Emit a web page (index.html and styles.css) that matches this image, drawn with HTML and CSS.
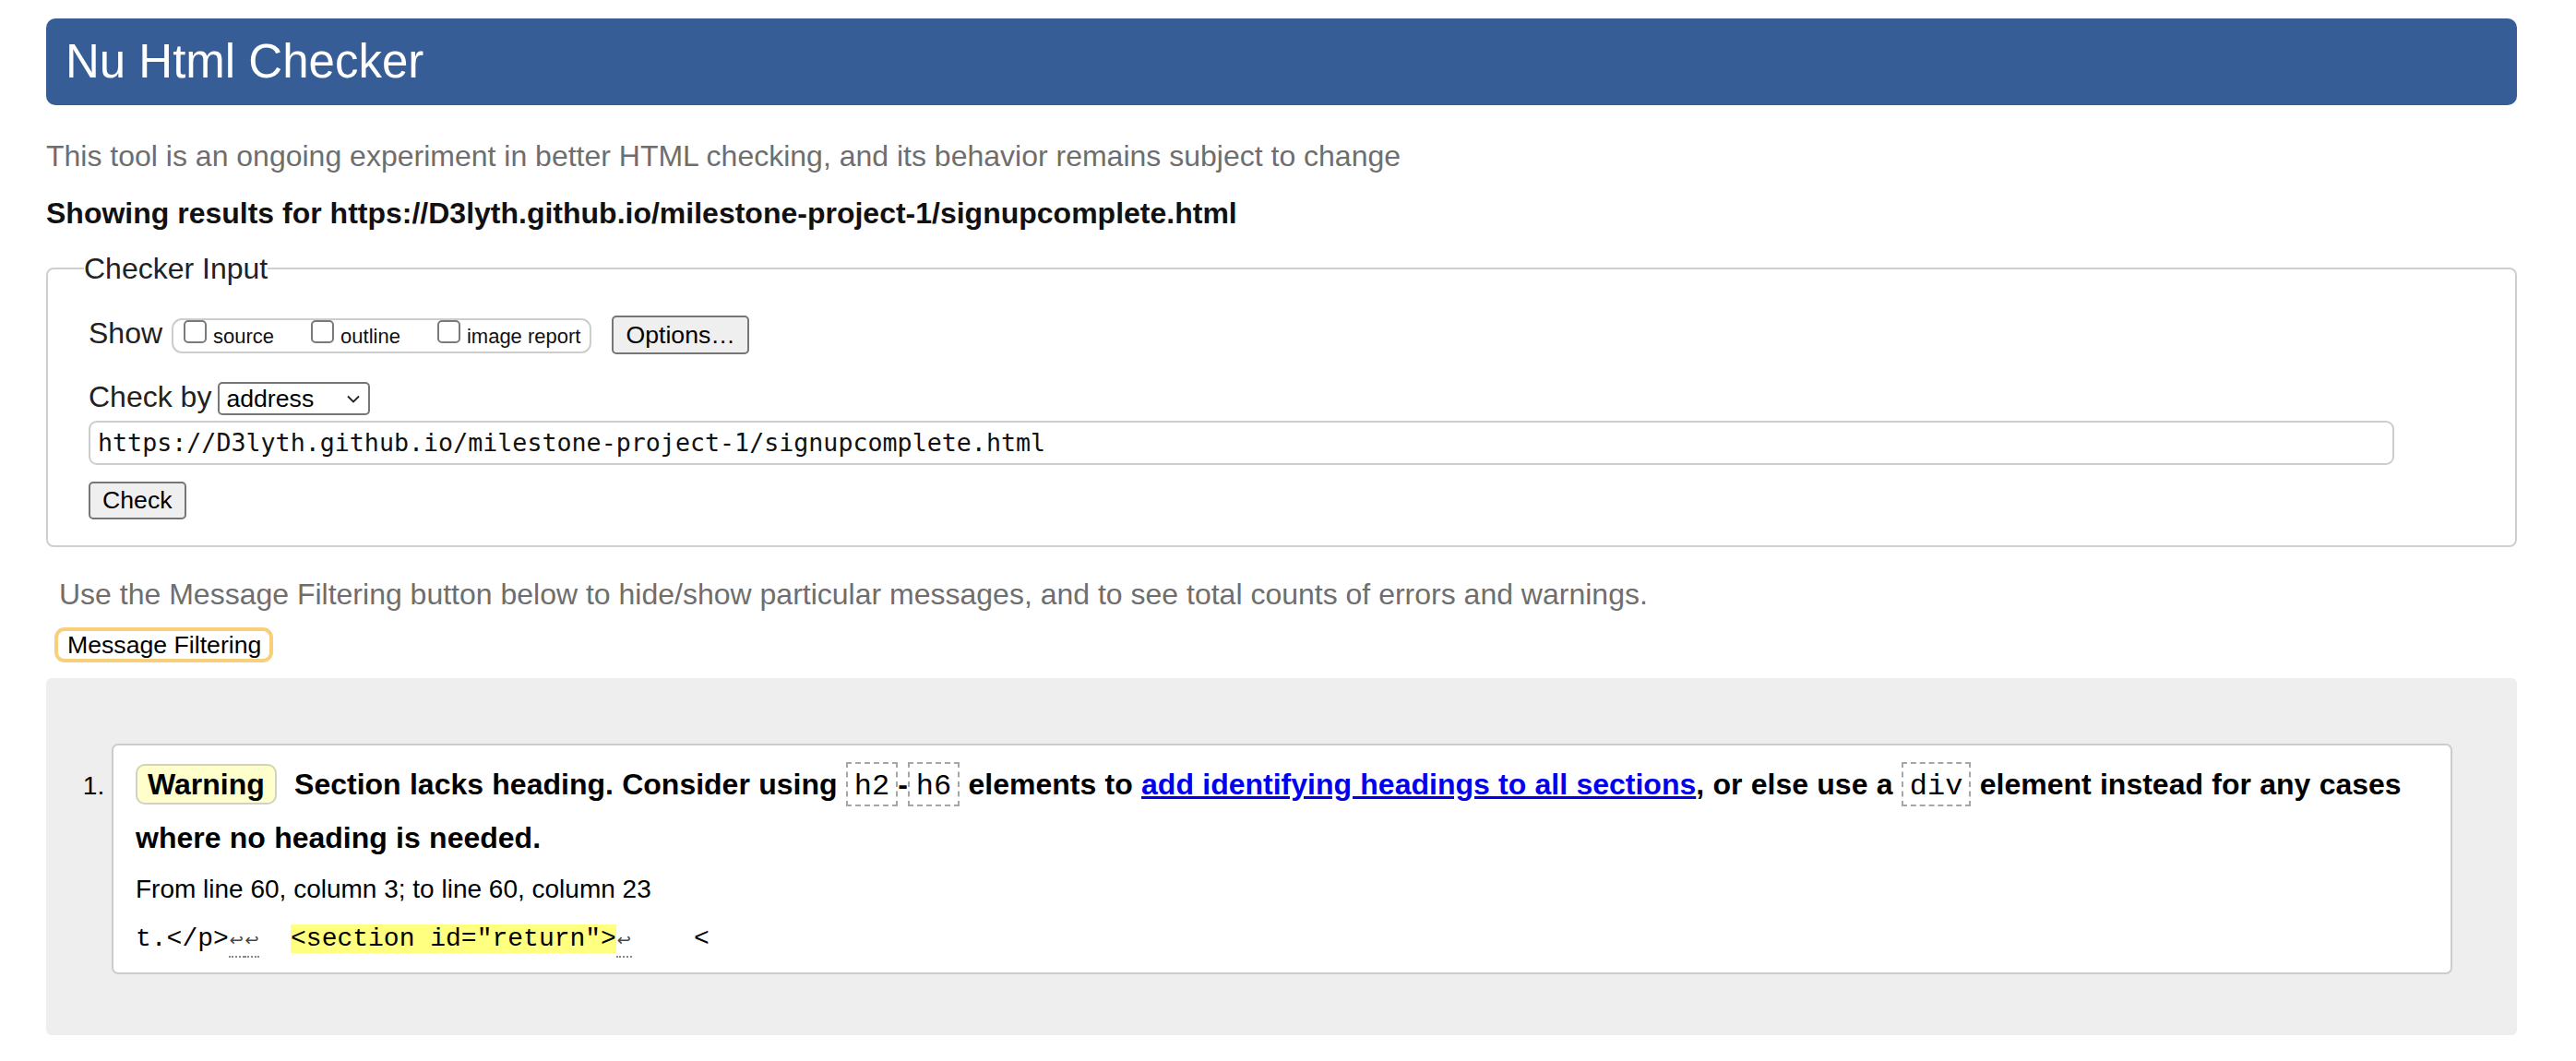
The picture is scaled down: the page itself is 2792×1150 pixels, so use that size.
FILE: index.html
```html
<!DOCTYPE html>
<html lang="en">
<head>
<meta charset="utf-8">
<title>Showing results for https://D3lyth.github.io/milestone-project-1/signupcomplete.html - Nu Html Checker</title>
<link rel="stylesheet" href="styles.css">
</head>
<body>
<h1 class="title">Nu Html Checker</h1>
<p class="intro">This tool is an ongoing experiment in better HTML checking, and its behavior remains subject to change</p>
<p class="showing">Showing results for https://D3lyth.github.io/milestone-project-1/signupcomplete.html</p>
<fieldset class="checker">
  <legend class="checker-legend">Checker Input</legend>
  <div class="row row-show">
    <span class="label">Show</span>
    <span class="opts">
      <span class="opt"><span class="cb"></span><span class="opt-label">source</span></span>
      <span class="opt"><span class="cb"></span><span class="opt-label">outline</span></span>
      <span class="opt"><span class="cb"></span><span class="opt-label">image report</span></span>
    </span>
    <span class="btn btn-options">Options…</span>
  </div>
  <div class="row row-checkby">
    <span class="label">Check by</span>
    <span class="select"><span class="select-text">address</span><svg class="chev" width="14" height="9" viewBox="0 0 14 9"><path d="M1 1.5 L7 7.5 L13 1.5" fill="none" stroke="#222" stroke-width="1.8"/></svg></span>
  </div>
  <div class="url">https://D3lyth.github.io/milestone-project-1/signupcomplete.html</div>
  <div class="row row-check">
    <span class="btn btn-check">Check</span>
  </div>
</fieldset>
<p class="hint">Use the Message Filtering button below to hide/show particular messages, and to see total counts of errors and warnings.</p>
<span class="filter-btn">Message Filtering</span>
<div class="results">
  <ol class="messages">
    <li class="msg">
      <p class="msg-text"><span class="badge">Warning</span> Section lacks heading. Consider using <code class="tag">h2</code>-<code class="tag">h6</code> elements to <a class="link" href="#">add identifying headings to all sections</a>, or else use a <code class="tag">div</code> element instead for any cases where no heading is needed.</p>
      <p class="loc">From line 60, column 3; to line 60, column 23</p>
      <p class="extract">t.&lt;/p&gt;<b class="lf">↩</b><b class="lf">↩</b>  <mark class="hl">&lt;section id="return"&gt;</mark><b class="lf">↩</b>    &lt;</p>
    </li>
  </ol>
</div>
</body>
</html>
```
FILE: styles.css
```css
html {
  background: #fff;
}

body {
  margin: 0;
  padding: 20px 64px 0 50px;
  font-family: "Liberation Sans", Arial, Helvetica, sans-serif;
  color: #222;
}

.title {
  margin: 0;
  height: 94px;
  line-height: 94px;
  padding-left: 21px;
  background: #365d95;
  color: #fff;
  font-size: 51px;
  font-weight: normal;
  border-radius: 10px;
}

.intro {
  margin: 35px 0 0;
  font-size: 32px;
  line-height: 40px;
  color: #6e6e6e;
}

.showing {
  margin: 22px 0 0;
  font-size: 32px;
  line-height: 40px;
  font-weight: bold;
  color: #111;
}

.checker {
  margin: 20px 0 0;
  padding: 30px 44px 28px 44px;
  border: 2px solid #cfcfcf;
  border-radius: 8px;
  min-width: 0;
}

.checker-legend {
  padding: 0;
  margin-left: -5px;
  font-size: 32px;
  line-height: 40px;
  color: #222;
}

.row {
  display: flex;
  align-items: baseline;
}

.label {
  font-size: 32px;
  line-height: 40px;
  color: #222;
}

.opts {
  display: inline-flex;
  align-items: baseline;
  margin-left: 10px;
  padding: 0 10px 3px 11px;
  border: 2px solid #cdcdcd;
  border-radius: 11px;
}

.opt {
  display: inline-flex;
  align-items: baseline;
  margin-right: 40px;
}

.opt:last-child {
  margin-right: 0;
}

.cb {
  display: inline-block;
  width: 25px;
  height: 25px;
  box-sizing: border-box;
  border: 2px solid #7a7a7a;
  border-radius: 5px;
  background: #fff;
}

.opt-label {
  margin-left: 7px;
  font-size: 22px;
  line-height: 26px;
  color: #111;
}

.btn {
  display: inline-block;
  box-sizing: border-box;
  padding: 4px 13px;
  font-size: 26.67px;
  line-height: 30px;
  color: #000;
  background: #efefef;
  border: 2px solid #767676;
  border-radius: 5px;
}

.btn-options {
  margin-left: 22px;
}

.row-checkby {
  margin-top: 26px;
}

.select {
  display: inline-flex;
  align-items: baseline;
  justify-content: space-between;
  box-sizing: border-box;
  width: 165px;
  height: 36px;
  margin-left: 7px;
  padding: 0 9px 0 7px;
  font-size: 26.67px;
  line-height: 32px;
  color: #000;
  background: #fff;
  border: 2px solid #767676;
  border-radius: 5px;
}

.chev {
  align-self: center;
}

.url {
  box-sizing: border-box;
  width: calc(100% - 87px);
  height: 48px;
  margin-top: 6px;
  padding: 0 8px;
  font-family: "DejaVu Sans Mono", Menlo, monospace;
  font-size: 26.67px;
  line-height: 44px;
  color: #111;
  border: 2px solid #cdcdcd;
  border-radius: 9px;
  white-space: nowrap;
}

.row-check {
  margin-top: 18px;
}

.btn-check {
  padding: 3px 13px 4px;
}

.hint {
  margin: 31px 0 0 14px;
  font-size: 32px;
  line-height: 40px;
  color: #6e6e6e;
}

.filter-btn {
  display: inline-block;
  margin: 16px 0 0 9px;
  padding: 0 9px 0 10px;
  font-size: 26.67px;
  line-height: 30px;
  color: #000;
  background: #fff;
  border: 4px solid #f8d07c;
  border-radius: 11px;
}

.results {
  margin-top: 17px;
  padding: 71px 70px 66px 0;
  background: #eeeeee;
  border-radius: 6px;
}

.messages {
  margin: 0;
  padding-left: 71px;
}

.msg {
  padding: 13px 24px 16px;
  font-size: 28px;
  color: #000;
  background: #fff;
  border: 2px solid #cccccc;
  border-radius: 7px;
}

.msg-text {
  margin: 0;
  font-size: 32px;
  line-height: 58px;
  font-weight: bold;
  word-spacing: 0.4px;
}

.badge {
  margin-right: 10px;
  padding: 2px 11px;
  background: #ffffcc;
  border: 2px solid #d2d2c0;
  border-radius: 10px;
}

.tag {
  display: inline-block;
  padding: 7px 7px 1px;
  font-family: "Liberation Mono", "Courier New", monospace;
  font-size: 32px;
  line-height: 36px;
  font-weight: normal;
  word-spacing: 0;
  border: 2px dashed #a6a6a6;
}

.link {
  color: #0000ee;
  text-decoration: underline;
}

.loc {
  margin: 9px 0 0;
  font-size: 28px;
  line-height: 36px;
}

.extract {
  margin: 18px 0 0;
  font-family: "Liberation Mono", "Courier New", monospace;
  font-size: 28px;
  line-height: 36px;
  white-space: pre;
}

.hl {
  background: #ffff80;
  color: #000;
}

.lf {
  display: inline-block;
  width: 16.8px;
  padding-bottom: 7px;
  font-family: "DejaVu Sans", sans-serif;
  font-size: 18px;
  line-height: 20px;
  font-weight: normal;
  text-align: center;
  color: #444;
  border-bottom: 2px dotted #888;
}
```
